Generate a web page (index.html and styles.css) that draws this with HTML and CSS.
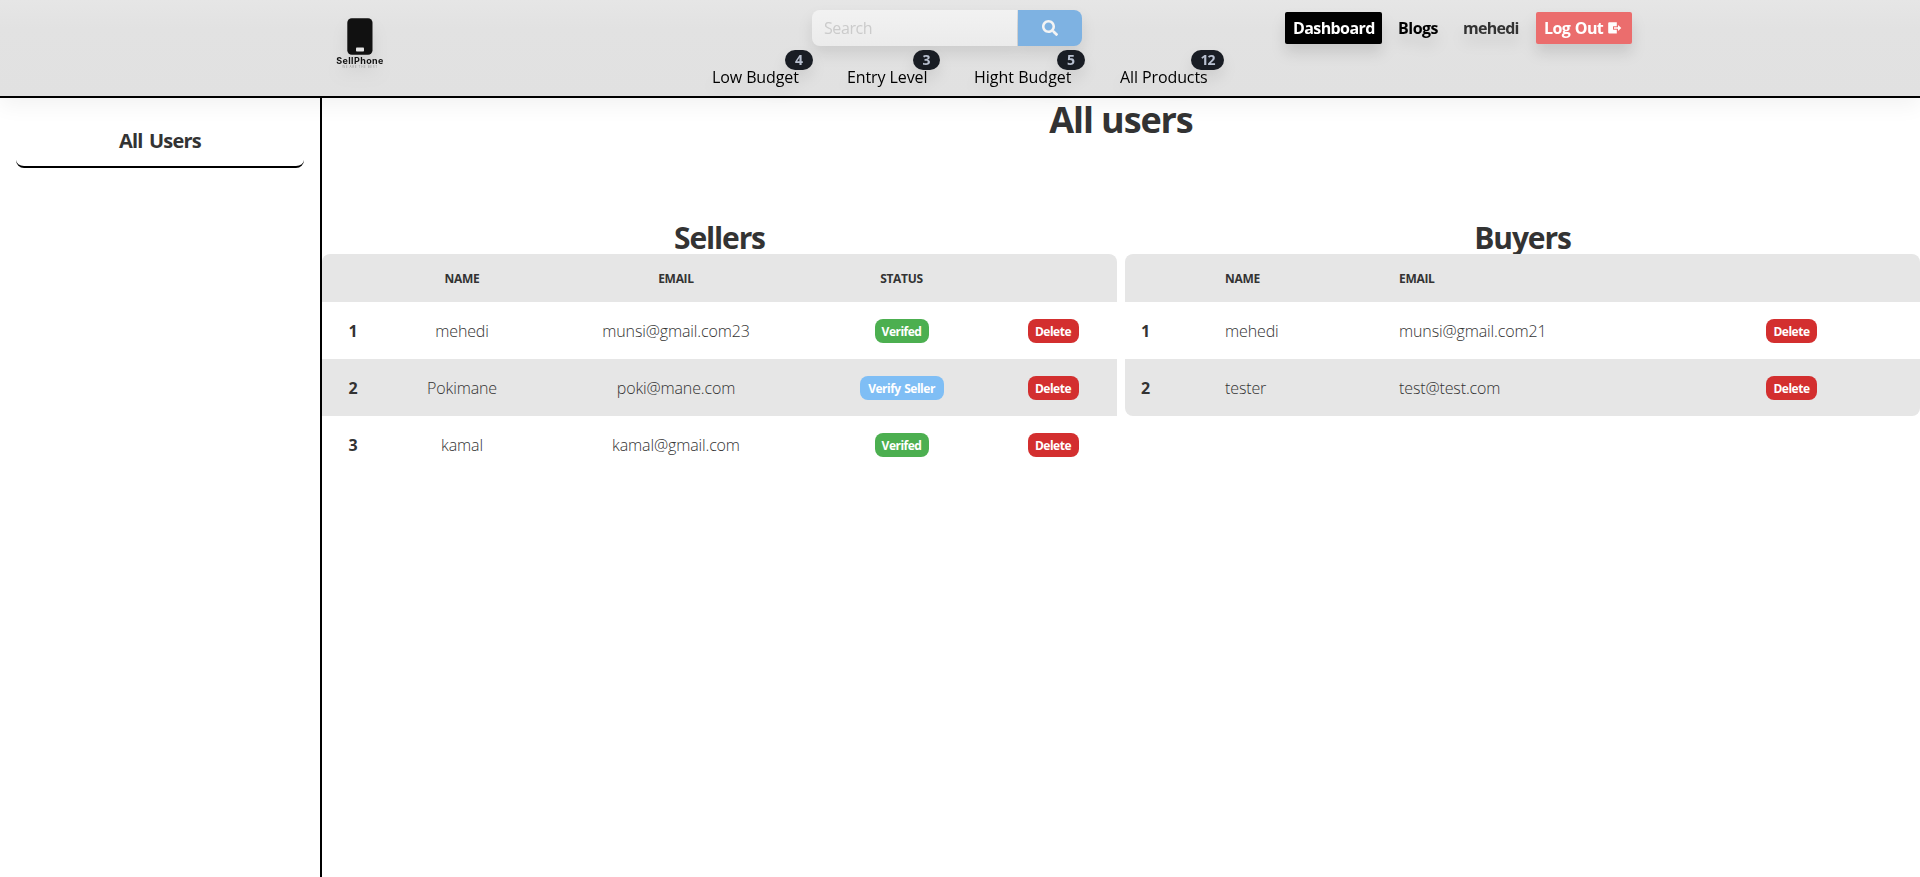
FILE: index.html
```html
<!DOCTYPE html>
<html lang="en">
<head>
<meta charset="utf-8">
<title>SellPhone</title>
<link rel="stylesheet" href="styles.css">
</head>
<body>
<header class="navbar">
  <a class="logo">
    <svg class="logo-mark" width="26" height="37" viewBox="0 0 26 37"><rect x=".3" y=".3" width="25.2" height="36.4" rx="4.5" fill="#111"/><rect x="9" y="29.5" width="8" height="4" rx=".8" fill="#e4e4e4"/></svg>
    <span class="logo-name">SellPhone</span>
    <span class="logo-tag">WE ARE THE BEST</span>
  </a>
  <div class="center">
    <form class="search">
      <input class="search-input" placeholder="Search">
      <button class="search-btn" type="button"><svg width="16" height="16" viewBox="0 0 512 512" fill="#f4f4f4"><path d="M505 442.700 405.300 343c-4.500-4.500-10.600-7-17-7H372c27.600-35.300 44-79.700 44-128C416 93.100 322.900 0 208 0S0 93.100 0 208s93.100 208 208 208c48.300 0 92.700-16.400 128-44v16.300c0 6.400 2.500 12.500 7 17l99.700 99.700c9.400 9.400 24.600 9.400 33.900 0l28.300-28.300c9.400-9.400 9.400-24.600.1-34zM208 336c-70.700 0-128-57.200-128-128 0-70.700 57.200-128 128-128 70.700 0 128 57.200 128 128 0 70.700-57.200 128-128 128z"/></svg></button>
    </form>
    <nav class="links">
      <a class="link">Low Budget<span class="badge">4</span></a>
      <a class="link entry">Entry Level<span class="badge">3</span></a>
      <a class="link hight">Hight Budget<span class="badge">5</span></a>
      <a class="link all">All Products<span class="badge">12</span></a>
    </nav>
  </div>
  <div class="account">
    <a class="pill dark">Dashboard</a>
    <a class="plain blogs">Blogs</a>
    <span class="plain user">mehedi</span>
    <a class="pill red">Log Out<svg width="14" height="12" viewBox="0 0 14 12"><path fill="#fff" d="M1.200.3h7.600v11.200H1.200q-1 0-1-1V1.300q0-1 1-1z"/><path fill="#eb6d6d" d="M5 4.300h4.500v3.400H5z"/><path fill="#fff" d="M6 5.200h4V3l3.300 3-3.300 3V6.800H6z"/></svg></a>
  </div>
</header>
<div class="layout">
  <aside class="sidebar"><a class="side-item">All Users</a></aside>
  <main class="content">
    <h1 class="title">All users</h1>
    <div class="panels">
      <section>
        <h2 class="heading">Sellers</h2>
        <div class="table sellers">
          <div class="row head"><span></span><span>NAME</span><span>EMAIL</span><span>STATUS</span><span></span></div>
          <div class="row"><b>1</b><span>mehedi</span><span>munsi@gmail.com23</span><span><i class="tag green">Verifed</i></span><span><i class="tag delete">Delete</i></span></div>
          <div class="row alt"><b>2</b><span>Pokimane</span><span>poki@mane.com</span><span><i class="tag blue">Verify Seller</i></span><span><i class="tag delete">Delete</i></span></div>
          <div class="row"><b>3</b><span>kamal</span><span>kamal@gmail.com</span><span><i class="tag green">Verifed</i></span><span><i class="tag delete">Delete</i></span></div>
        </div>
      </section>
      <section>
        <h2 class="heading">Buyers</h2>
        <div class="table buyers">
          <div class="row head"><span></span><span>NAME</span><span>EMAIL</span><span></span></div>
          <div class="row"><b>1</b><span>mehedi</span><span>munsi@gmail.com21</span><span><i class="tag delete">Delete</i></span></div>
          <div class="row alt"><b>2</b><span>tester</span><span>test@test.com</span><span><i class="tag delete">Delete</i></span></div>
        </div>
      </section>
    </div>
  </main>
</div>
</body>
</html>
```
FILE: styles.css
```css
* { box-sizing: border-box; }
body { margin: 0; height: 877px; overflow: hidden; display: flex; flex-direction: column; background: #fff; color: #333; font: 16px/24px "Open Sans", "Noto Sans", sans-serif; }
h1, h2 { margin: 0; font-weight: 700; }

.navbar { position: relative; z-index: 1; flex: none; height: 98px; border-bottom: 2px solid #000; background: linear-gradient(#e6e6e6, #e2e2e2 30%, #e1e1e1); box-shadow: 0 8px 20px rgba(0,0,0,.05); display: grid; grid-template-columns: 320px 1fr 430px; padding: 0 205px 0 0; }
.logo { display: flex; flex-direction: column; align-items: center; margin-left: 320px; padding-top: 18px; width: 80px; filter: drop-shadow(0 10px 8px rgba(0,0,0,.08)); }
.logo-mark { display: block; flex: none; }
.logo-name { font: 700 9px/12px Inter, sans-serif; letter-spacing: .4px; color: #111; }
.logo-tag { font: 3px/3px Inter, sans-serif; letter-spacing: .6px; color: #999; white-space: nowrap; margin-top: -1px; }
.center { padding: 10px 0 0 392px; }
.search { display: flex; width: 270px; height: 36px; margin-left: 100px; filter: drop-shadow(0 8px 7px rgba(0,0,0,.09)); }
.search-input { width: 205px; border: 0; border-radius: 8px 0 0 8px; background: linear-gradient(#f2f2f2, #ebebeb); padding: 0 12px; font: 16px "Open Sans", sans-serif; letter-spacing: -.4px; }
.search-input::placeholder { color: #cbcbcb; opacity: 1; }
.search-btn { width: 64px; margin-left: 1px; border: 0; padding: 0; border-radius: 0 8px 8px 0; background: #7eb2e2; display: flex; align-items: center; justify-content: center; }
.links { display: flex; margin-top: 19px; color: #000; filter: drop-shadow(0 8px 7px rgba(0,0,0,.08)); }
.link { position: relative; width: 135px; flex: none; white-space: nowrap; letter-spacing: -.1px; }
.entry { width: 127px; }
.hight { width: 146px; letter-spacing: 0; }
.badge { position: absolute; left: 73px; top: -15px; height: 20px; padding: 0 10px; border-radius: 10px; background: #191d24; color: #b8c0d0; font-size: 14px; line-height: 20px; font-weight: 700; letter-spacing: -.2px; }
.entry .badge { left: 66px; padding: 0 9.500px; }
.hight .badge { left: 83px; }
.all .badge { left: 71px; padding: 0 9.500px; letter-spacing: -1px; }

.account { display: flex; align-items: center; height: 32px; margin-top: 12px; font-weight: 700; letter-spacing: -.6px; filter: drop-shadow(0 9px 7px rgba(0,0,0,.11)); }
.pill { height: 32px; line-height: 33px; padding-left: 8px; border-radius: 2px; color: #fff; white-space: nowrap; }
.dark { width: 97px; background: #000; }
.red { display: flex; align-items: center; gap: 5px; width: 96px; background: #eb6d6d; word-spacing: 1px; }
.plain { font-weight: 700; letter-spacing: -.5px; }
.blogs { width: 65px; margin-left: 16px; color: #000; }
.user { width: 73px; letter-spacing: -.75px; }

.layout { flex: 1; display: grid; grid-template-columns: 322px 1fr; }
.sidebar { border-right: 2px solid #000; padding: 16px 16px 0; }
.side-item { display: block; height: 54px; border-bottom: 2px solid #000; border-radius: 8px; text-align: center; font-size: 20px; line-height: 53px; font-weight: 700; letter-spacing: -.8px; word-spacing: 2px; }
.title { height: 122px; text-align: center; font-size: 36px; line-height: 43px; letter-spacing: -1.100px; }
.panels { display: grid; grid-template-columns: 1fr 1fr; gap: 8px; }
.heading { height: 34px; text-align: center; font-size: 30px; line-height: 35px; letter-spacing: -1.150px; }
.table { position: relative; border-radius: 8px; overflow: hidden; background: #fff; }
.row { display: grid; align-items: center; height: 57px; font-weight: 300; letter-spacing: -.13px; }
.row b { font-weight: 700; }
.head { height: 48px; padding-top: 1px; background: #e6e6e6; font-size: 12px; line-height: 26px; font-weight: 700; letter-spacing: -.3px; }
.alt { background: #e6e6e6; }
.sellers .row { grid-template-columns: 62px 156px 272px 179px 1fr; text-align: center; }
.sellers .row > :last-child { padding-right: 2px; }
.buyers .row { grid-template-columns: 84px 174px 367px 1fr; }
.buyers .row > * { padding-left: 16px; }
.tag { display: inline-block; vertical-align: middle; height: 24px; line-height: 25px; border-radius: 8px; color: #fff; text-align: center; font-style: normal; font-size: 12px; font-weight: 700; letter-spacing: -.5px; word-spacing: 1px; }
.green { width: 54px; background: #4caf50; }
.delete { width: 51px; background: #d32f2f; }
.blue { width: 84px; background: #7fbef5; }
```
